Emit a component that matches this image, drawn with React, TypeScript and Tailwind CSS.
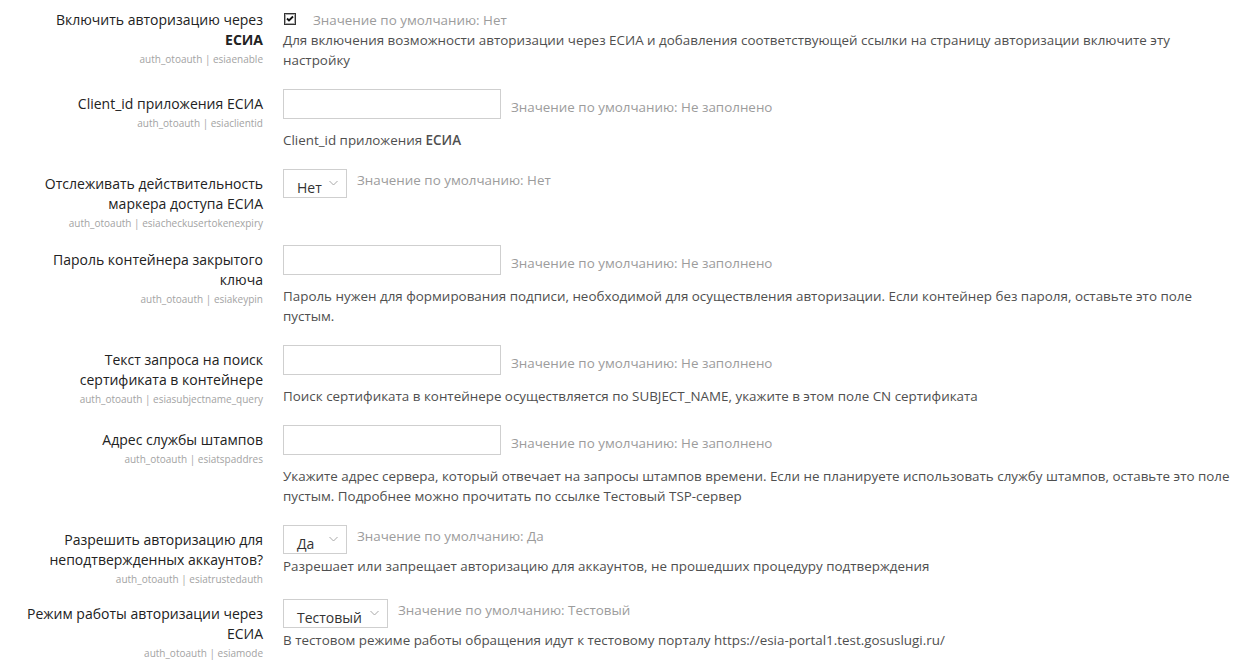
import React from "react";

type Control = "checkbox" | "input" | "select";

interface Setting {
  label: React.ReactNode;
  code: string;
  control: Control;
  value?: string;
  selectWidth?: string;
  defaultText: string;
  desc?: React.ReactNode;
  mb: string;
}

const settings: Setting[] = [
  {
    label: (
      <>
        Включить авторизацию через <b className="font-bold">ЕСИА</b>
      </>
    ),
    code: "auth_otoauth | esiaenable",
    control: "checkbox",
    defaultText: "Значение по умолчанию: Нет",
    desc: "Для включения возможности авторизации через ЕСИА и добавления соответствующей ссылки на страницу авторизации включите эту настройку",
    mb: "mb-[19px]",
  },
  {
    label: "Client_id приложения ЕСИА",
    code: "auth_otoauth | esiaclientid",
    control: "input",
    defaultText: "Значение по умолчанию: Не заполнено",
    desc: (
      <>
        Client_id приложения <span className="font-semibold">ЕСИА</span>
      </>
    ),
    mb: "mb-[19px]",
  },
  {
    label: "Отслеживать действительность маркера доступа ЕСИА",
    code: "auth_otoauth | esiacheckusertokenexpiry",
    control: "select",
    value: "Нет",
    selectWidth: "w-[64px]",
    defaultText: "Значение по умолчанию: Нет",
    mb: "mb-[13px]",
  },
  {
    label: "Пароль контейнера закрытого ключа",
    code: "auth_otoauth | esiakeypin",
    control: "input",
    defaultText: "Значение по умолчанию: Не заполнено",
    desc: "Пароль нужен для формирования подписи, необходимой для осуществления авторизации. Если контейнер без пароля, оставьте это поле пустым.",
    mb: "mb-[19px]",
  },
  {
    label: "Текст запроса на поиск сертификата в контейнере",
    code: "auth_otoauth | esiasubjectname_query",
    control: "input",
    defaultText: "Значение по умолчанию: Не заполнено",
    desc: "Поиск сертификата в контейнере осуществляется по SUBJECT_NAME, укажите в этом поле CN сертификата",
    mb: "mb-[17px]",
  },
  {
    label: "Адрес службы штампов",
    code: "auth_otoauth | esiatspaddres",
    control: "input",
    defaultText: "Значение по умолчанию: Не заполнено",
    desc: "Укажите адрес сервера, который отвечает на запросы штампов времени. Если не планируете использовать службу штампов, оставьте это поле пустым. Подробнее можно прочитать по ссылке Тестовый TSP-сервер",
    mb: "mb-[19px]",
  },
  {
    label: "Разрешить авторизацию для неподтвержденных аккаунтов?",
    code: "auth_otoauth | esiatrustedauth",
    control: "select",
    value: "Да",
    selectWidth: "w-[64px]",
    defaultText: "Значение по умолчанию: Да",
    desc: "Разрешает или запрещает авторизацию для аккаунтов, не прошедших процедуру подтверждения",
    mb: "mb-[11px]",
  },
  {
    label: "Режим работы авторизации через ЕСИА",
    code: "auth_otoauth | esiamode",
    control: "select",
    value: "Тестовый",
    selectWidth: "w-[105px]",
    defaultText: "Значение по умолчанию: Тестовый",
    desc: "В тестовом режиме работы обращения идут к тестовому порталу https://esia-portal1.test.gosuslugi.ru/",
    mb: "mb-[10px]",
  },
];

function Checkbox() {
  return (
    <svg width="12" height="12" viewBox="0 0 12 12" className="shrink-0">
      <rect x="0.5" y="0.5" width="11" height="11" fill="#fff" stroke="#333" />
      <rect x="1.5" y="1.5" width="9" height="9" fill="none" stroke="#555" strokeDasharray="1 1" />
      <path d="M3 5.5 L5 7.5 L9 3.5" fill="none" stroke="#111" strokeWidth="1.8" />
    </svg>
  );
}

function Chevron() {
  return (
    <svg width="9" height="6" viewBox="0 0 9 6" className="shrink-0">
      <path d="M0.5 1 L4.5 5 L8.5 1" fill="none" stroke="#a8a8a8" strokeWidth="1" />
    </svg>
  );
}

function SettingRow({ s, first }: { s: Setting; first: boolean }) {
  return (
    <div className={`flex items-start ${s.mb}`}>
      <div className={`w-[263px] shrink-0 pl-[25px] text-right ${first ? "pt-0" : "pt-[5px]"}`}>
        <div className="text-[14px] leading-[20px] text-[#222]">{s.label}</div>
        <div className="text-[10px] leading-[18px] text-[#a3a3a3]">{s.code}</div>
      </div>
      <div className="ml-[20px] flex-1 pr-[14px] text-[13.4px]">
        {s.control === "checkbox" && (
          <div className="flex h-[20px] items-center">
            <div className="ml-[1px] -mt-[2px]">
              <Checkbox />
            </div>
            <span className="ml-[17px] leading-[20px] text-[#9c9c9c]">{s.defaultText}</span>
          </div>
        )}
        {s.control === "input" && (
          <div className="flex items-start">
            <div className="h-[30px] w-[218px] shrink-0 border border-[#cfcfcf] bg-white" />
            <span className="ml-[10px] pt-[8px] leading-[20px] text-[#9c9c9c]">{s.defaultText}</span>
          </div>
        )}
        {s.control === "select" && (
          <div className="flex items-start">
            <div
              className={`flex h-[29px] shrink-0 items-start justify-between border border-[#cfcfcf] bg-white pl-[13px] pr-[8px] ${s.selectWidth}`}
            >
              <span className="pt-[8px] text-[14px] leading-[20px] text-[#333]">{s.value}</span>
              <div className="pt-[10px]">
                <Chevron />
              </div>
            </div>
            <span className="ml-[10px] pt-[1px] leading-[20px] text-[#9c9c9c]">{s.defaultText}</span>
          </div>
        )}
        {s.desc && (
          <div
            className={`leading-[20px] text-[#4f4f4f] ${
              s.control === "input" ? "mt-[11px]" : s.control === "select" ? "mt-[2px]" : "mt-0"
            }`}
          >
            {s.desc}
          </div>
        )}
      </div>
    </div>
  );
}

export default function App() {
  return (
    <div
      className="min-h-[672px] w-[1250px] bg-white pt-[10px]"
      style={{ fontFamily: '"Open Sans", "Noto Sans", sans-serif' }}
    >
      {settings.map((s, i) => (
        <SettingRow key={s.code} s={s} first={i === 0} />
      ))}
    </div>
  );
}
